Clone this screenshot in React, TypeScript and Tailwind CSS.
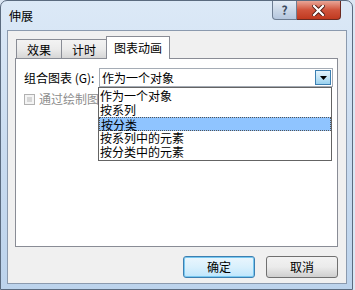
import React from 'react';

const font = { fontFamily: '"Noto Sans CJK SC", "Liberation Sans", sans-serif' };

const TitleBar = () => (
    <div className="flex h-[29px] items-start justify-between pl-[8px] pr-[11px]">
        <div className="mt-[7px] text-[12px] leading-[16px] text-black">伸展</div>
        <div className="flex">
            {/* help button */}
            <div className="flex h-[19px] w-[25px] items-center justify-center rounded-bl-[4px] border border-t-0 border-[#6d7d92] bg-gradient-to-b from-[#e4ecf6] via-[#cbd8e8] to-[#b4c6de] text-[12px] font-bold text-[#3c4a5e]">
                ?
            </div>
            {/* close button */}
            <div className="flex h-[19px] w-[44px] items-center justify-center rounded-br-[4px] border border-l-0 border-t-0 border-[#6b2a21] bg-gradient-to-b from-[#e8a597] via-[#d0533b] to-[#c0391f]">
                <svg width="13" height="11" viewBox="0 0 13 11">
                    <path d="M2 1 L11 10 M11 1 L2 10" stroke="#4b1a12" strokeWidth="4" strokeLinecap="square" />
                    <path d="M2 1 L11 10 M11 1 L2 10" stroke="#ffffff" strokeWidth="2.2" strokeLinecap="square" />
                </svg>
            </div>
        </div>
    </div>
);

const Tab = ({ label, active }: { label: string; active?: boolean }) =>
    active ? (
        <div className="relative z-10 -mb-px flex h-[23px] items-start border border-b-0 border-[#898c95] bg-white px-[7px] pt-[2px] text-[12px] leading-[17px] text-black">
            {label}
        </div>
    ) : (
        <div className="flex h-[19px] items-start border border-b-0 border-[#898c95] bg-gradient-to-b from-[#f3f3f3] via-[#ebebeb] to-[#d6d6d6] px-[10px] pt-[1px] text-[12px] leading-[17px] text-black">
            {label}
        </div>
    );

const options = ['作为一个对象', '按系列', '按分类', '按系列中的元素', '按分类中的元素'];

export default function App() {
    return (
        <div
            className="h-[290px] w-[355px] overflow-hidden bg-[#dbe6f3]"
            style={font}
        >
            <div className="h-[290px] w-[353px] rounded-t-[7px] border border-[#5b6b7f] bg-gradient-to-b from-[#dce9f7] via-[#cadcf0] to-[#bcd3ec]">
                <TitleBar />

                {/* client area */}
                <div className="ml-[6px] h-[254px] w-[340px] border border-[#8b9aae] bg-[#f0f0f0]">
                    <div className="ml-[7px] mt-[5px] w-[323px]">
                        {/* tabs */}
                        <div className="flex items-end pl-[1px]">
                            <div className="flex -mr-px">
                                <Tab label="效果" />
                                <div className="-ml-px">
                                    <Tab label="计时" />
                                </div>
                            </div>
                            <Tab label="图表动画" active />
                        </div>

                        {/* tab panel */}
                        <div className="relative h-[189px] border border-[#898c95] bg-white">
                            <div className="mt-[9px] flex items-center pl-[8px]">
                                <div className="w-[75px] text-[12px] leading-[19px] text-black">组合图表 (G):</div>
                                <div className="flex h-[19px] w-[234px] items-center justify-between border border-[#a5acb5] bg-white pl-[2px] pr-px">
                                    <span className="text-[12px] leading-[17px] text-black">作为一个对象</span>
                                    <div className="flex h-[15px] w-[16px] items-center justify-center border border-[#3c7fb1] bg-gradient-to-b from-[#e5f4fc] via-[#c4e5f6] to-[#98d1ef]">
                                        <svg width="7" height="4" viewBox="0 0 7 4">
                                            <path d="M0 0 H7 L3.5 4 Z" fill="#000" />
                                        </svg>
                                    </div>
                                </div>
                            </div>

                            <div className="mt-[4px] flex items-center pl-[8px]">
                                <div className="mr-[4px] h-[11px] w-[11px] border border-[#b1b1b1] bg-[#f4f4f4] p-[2px]">
                                    <div className="h-full w-full bg-[#d6d6d6]" />
                                </div>
                                <span className="text-[12px] leading-[16px] text-[#8d8d8d]">通过绘制图表背景启动动画</span>
                            </div>

                            {/* open dropdown list */}
                            <div className="absolute left-[82px] top-[28px] w-[234px] border border-[#646464] bg-white py-px">
                                {options.map((o, i) => (
                                    <div
                                        key={o}
                                        className={`h-[14px] pl-[1px] text-[12px] leading-[13px] text-black ${
                                            i === 2 ? 'border border-dotted border-[#555] bg-[#8fc4ff] pl-0' : ''
                                        }`}
                                    >
                                        {o}
                                    </div>
                                ))}
                            </div>
                        </div>

                        {/* buttons */}
                        <div className="mt-[9px] flex justify-end gap-[11px]">
                            <div className="flex h-[22px] w-[72px] items-center justify-center rounded-[3px] border border-[#3c7fb1] bg-gradient-to-b from-[#eaf6fd] via-[#d9f0fc] to-[#bee6fd] text-[12px] text-black shadow-[inset_0_0_0_1px_#78c8f0]">
                                确定
                            </div>
                            <div className="flex h-[22px] w-[72px] items-center justify-center rounded-[3px] border border-[#707070] bg-gradient-to-b from-[#f2f2f2] via-[#ebebeb] to-[#cfcfcf] text-[12px] text-black">
                                取消
                            </div>
                        </div>
                    </div>
                </div>
            </div>
        </div>
    );
}
